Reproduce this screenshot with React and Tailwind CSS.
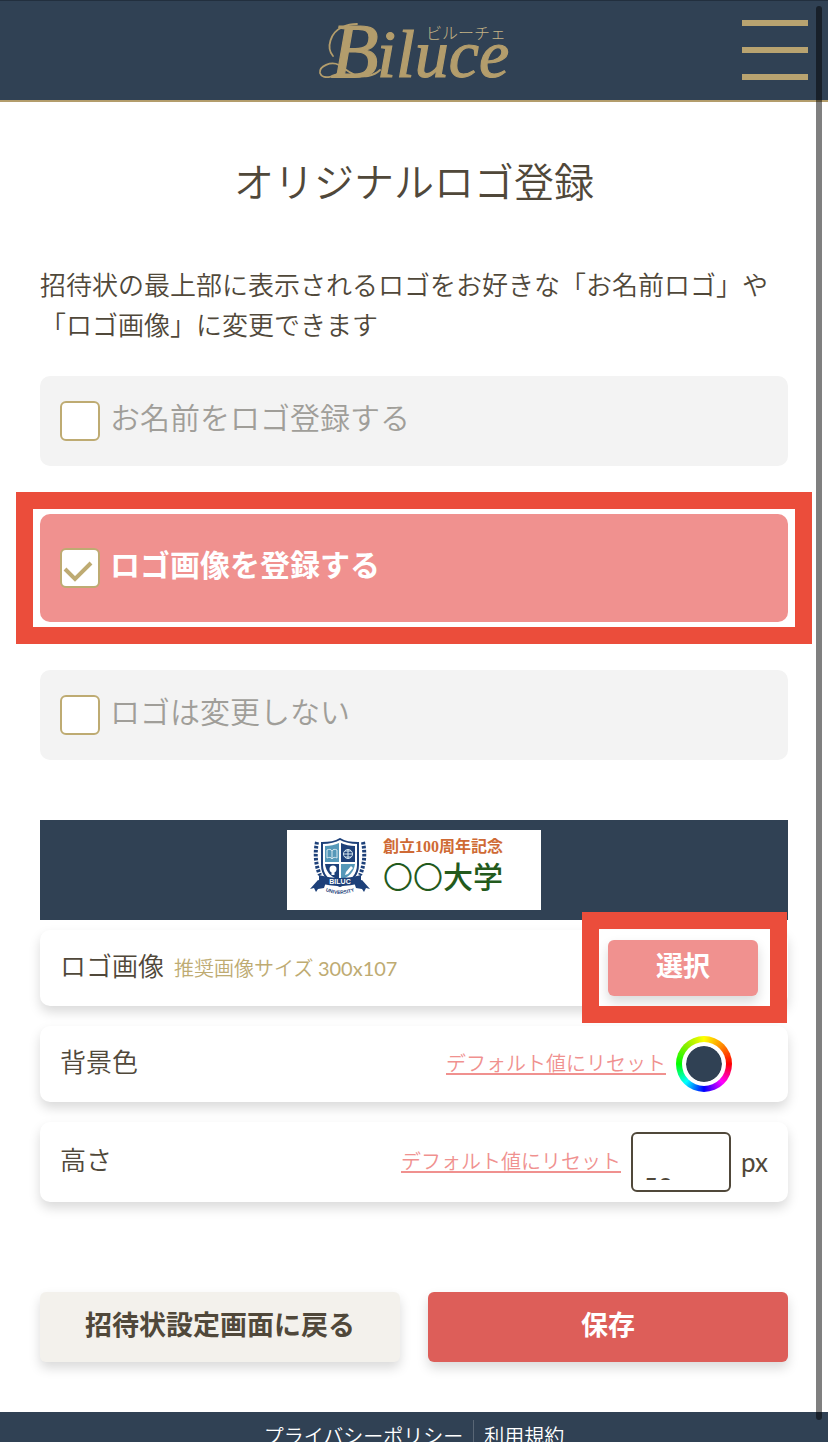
import { useState } from "react";

const LOGO_OPTIONS = [
  { id: "name", label: "お名前をロゴ登録する" },
  { id: "image", label: "ロゴ画像を登録する" },
  { id: "none", label: "ロゴは変更しない" },
];

const DEFAULT_COLOR = "#304154";

const BiluceLogo = () => (
  <svg viewBox="0 0 190 60" className="h-[60px] w-[190px] overflow-visible" role="img" aria-label="Biluce ビルーチェ">
    <g fill="none" stroke="#b39d6c" strokeLinecap="round">
      <path d="M14 36C7 28 11 12 24 7c4-2 9-3 14-3" strokeWidth="1.8" />
      <path d="M24 48C18 58 3 60 1 53c-1-7 11-12 19-8 9 6 16 13 29 11 5-1 9-3 12-6" strokeWidth="1.8" />
    </g>
    <text
      y="57"
      fill="#b39d6c"
      stroke="#b39d6c"
      strokeWidth="1.2"
      fontFamily="'Liberation Serif', serif"
      fontStyle="italic"
    >
      <tspan x="12" fontSize="78">B</tspan>
      <tspan x="58" fontSize="68">iluce</tspan>
    </text>
    <text
      x="107"
      y="19"
      fill="#c4b386"
      fontSize="16"
      fontWeight="300"
      fontFamily="'Noto Sans CJK JP', sans-serif"
    >
      ビルーチェ
    </text>
  </svg>
);

const Crest = () => (
  <svg viewBox="0 0 62 58" className="h-[58px] w-[62px] shrink-0" aria-hidden="true">
    {/* laurel branches */}
    <g fill="none" stroke="#1d4079" strokeWidth="4" strokeDasharray="2.6 1.4">
      <path d="M8 4C6 14 6 26 11 37" />
      <path d="M54 4c2 10 2 22-3 33" />
    </g>
    {/* shield */}
    <path
      d="M31 1c5 3 11 4 18 4v22c0 10-7 17-18 21C20 44 13 37 13 27V5c7 0 13-1 18-4z"
      fill="#fff"
      stroke="#1d4079"
      strokeWidth="2"
    />
    <path d="M30 5v19H16V8c5 0 10-1 14-3z" fill="#5598b9" />
    <path d="M32 5c4 2 9 3 14 3v16H32z" fill="#1d4079" />
    <path d="M16 26h14v16c-8-3-13-8-14-16z" fill="#1d4079" />
    <path d="M32 26h14c-1 8-6 13-14 16z" fill="#5598b9" />
    <g fill="none" stroke="#d5e7ef" strokeWidth="1">
      <path d="M18 12c2-1 4-1 5 1 1-2 3-2 5-1v8c-2-1-4-1-5 1-1-2-3-2-5-1zM23 13v8" />
      <circle cx="39" cy="16" r="4.5" />
      <path d="M34.500 16h9M39 11.500v9M36 13h6M36 19h6" />
    </g>
    <circle cx="24" cy="31" r="3.500" fill="#fff" />
    <path d="M22.500 33h3v4h-3z" fill="#fff" />
    <path d="M36 37l1-3 5-6 2 2-5 6z" fill="#fff" />
    {/* ribbon */}
    <path d="M1 51l8-9 8 2-2 6-6 1-2 3-2-4zM61 51l-8-9-8 2 2 6 6 1 2 3 2-4z" fill="#1d4079" />
    <path d="M10 37c14 4 28 4 42 0v8c-14 4-28 4-42 0z" fill="#1d4079" />
    <text
      x="31"
      y="46"
      textAnchor="middle"
      fill="#fff"
      fontSize="7"
      fontWeight="700"
      fontFamily="'Liberation Sans', sans-serif"
    >
      BILUC
    </text>
    <path id="crest-arc" d="M12 51q19 10 38 0" fill="none" />
    <text fill="#1d4079" fontSize="5" fontWeight="700" fontFamily="'Liberation Sans', sans-serif">
      <textPath href="#crest-arc" startOffset="50%" textAnchor="middle">
        UNIVERSITY
      </textPath>
    </text>
  </svg>
);

const Header = () => (
  <header className="grid h-[102px] shrink-0 grid-cols-[1fr_auto_1fr] items-center border-t border-b-2 border-t-[#222f3e] border-b-[#b39d6c] bg-[#304154] px-5 pb-0.5">
    <a href="#" className="col-start-2">
      <BiluceLogo />
    </a>
    <button type="button" aria-label="メニュー" className="flex w-[66px] flex-col gap-[21px] justify-self-end">
      <span className="h-1.5 w-full bg-[#b8a370]" />
      <span className="h-1.5 w-full bg-[#b8a370]" />
      <span className="h-1.5 w-full bg-[#b8a370]" />
    </button>
  </header>
);

const LogoOption = ({ option, checked, onSelect }) => (
  <div className="relative">
    <label
      className={`flex items-center gap-2.5 rounded-[10px] px-5 text-[30px] leading-10 ${
        checked ? "h-[108px] bg-[#f0918f] font-bold text-white" : "h-[90px] bg-[#f3f3f3] font-[350] text-[#a09e99]"
      }`}
    >
      <span className="grid size-10 shrink-0">
        <input
          type="checkbox"
          checked={checked}
          onChange={onSelect}
          className="col-start-1 row-start-1 size-10 appearance-none rounded-md border-2 border-[#beab72] bg-white"
        />
        {checked && (
          <svg viewBox="0 0 40 40" className="pointer-events-none z-10 col-start-1 row-start-1 size-10">
            <path d="M5 21l10 10 16-16" fill="none" stroke="#beab72" strokeWidth="4" />
          </svg>
        )}
      </span>
      <span className="pb-2.5">{option.label}</span>
    </label>
    {checked && (
      <div className="pointer-events-none absolute -inset-x-6 -inset-y-[22px] border-[17px] border-[#eb4d3b]" />
    )}
  </div>
);

const SettingRow = ({ children }) => (
  <div className="flex min-h-[76px] items-center gap-2.5 rounded-[10px] bg-white px-5 shadow-[0_6px_12px_rgba(0,0,0,0.15)]">
    {children}
  </div>
);

const ResetLink = ({ onClick }) => (
  <a
    href="#"
    onClick={(e) => {
      e.preventDefault();
      onClick();
    }}
    className="ml-auto border-b-2 border-[#f0918f] text-xl leading-5 font-[350] text-[#f0918f]"
  >
    デフォルト値にリセット
  </a>
);

const App = () => {
  const [selected, setSelected] = useState("image");
  const [color, setColor] = useState(DEFAULT_COLOR);
  const [height, setHeight] = useState("50");

  return (
    <div className="relative flex h-screen flex-col overflow-hidden bg-white font-['Noto_Sans_CJK_JP',sans-serif] text-[#50483a]">
      <Header />

      <main className="shrink-0 px-10 pt-12 pb-[50px]">
        <h1 className="text-center text-[40px] leading-[60px] font-[350]">オリジナルロゴ登録</h1>
        <p className="mt-[54px] text-[26px] leading-10 font-[350]">
          招待状の最上部に表示されるロゴをお好きな「お名前ロゴ」や「ロゴ画像」に変更できます
        </p>

        <div className="mt-8 flex flex-col gap-12">
          {LOGO_OPTIONS.map((option) => (
            <LogoOption
              key={option.id}
              option={option}
              checked={selected === option.id}
              onSelect={() => setSelected(option.id)}
            />
          ))}
        </div>

        <div className="mt-[60px] flex h-[100px] items-center justify-center" style={{ backgroundColor: color }}>
          <div className="flex h-20 w-[254px] items-center gap-3 bg-white pb-1.5 pl-[22px]">
            <Crest />
            <div className="pb-2 whitespace-nowrap">
              <p className="font-['Liberation_Serif','Noto_Sans_CJK_JP',serif] text-base leading-6 font-bold text-[#cf6a35]">
                創立100周年記念
              </p>
              <p className="text-3xl leading-8 font-medium text-[#235a1c]">
                <span className="font-[350]">〇〇</span>大学
              </p>
            </div>
          </div>
        </div>

        <div className="mt-2.5 flex flex-col gap-5">
          <SettingRow>
            <span className="pb-1.5 text-[26px] leading-10 font-[350]">ロゴ画像</span>
            <span className="font-['Noto_Sans_CJK_JP',sans-serif] text-xl font-[350] text-[#beab72]">
              推奨画像サイズ <span className="font-['Lato',sans-serif] font-normal">300x107</span>
            </span>
            <div className="relative mr-2.5 ml-auto">
              <button
                type="button"
                className="h-14 w-[150px] rounded-md bg-[#f0918f] pb-1.5 text-[27px] leading-10 font-bold text-white shadow-[0_6px_12px_rgba(0,0,0,0.15)]"
              >
                選択
              </button>
              <div className="pointer-events-none absolute -top-7 -right-[29px] -bottom-[27px] -left-[26px] z-10 border-[17px] border-[#eb4d3b]" />
            </div>
          </SettingRow>

          <SettingRow>
            <label htmlFor="bg-color" className="pb-1.5 text-[26px] leading-10 font-[350]">
              背景色
            </label>
            <ResetLink onClick={() => setColor(DEFAULT_COLOR)} />
            <span className="mr-9 flex rounded-full bg-[conic-gradient(from_90deg,#f00,#f0f,#00f,#0ff,#0f0,#8e0,#ff0,#f80,#f00)] p-1.5">
              <span className="flex rounded-full bg-white p-1">
                <input
                  id="bg-color"
                  type="color"
                  value={color}
                  onChange={(e) => setColor(e.target.value)}
                  className="size-9 appearance-none rounded-full border-0 bg-transparent p-0 [&::-webkit-color-swatch]:rounded-full [&::-webkit-color-swatch]:border-0 [&::-webkit-color-swatch-wrapper]:p-0"
                />
              </span>
            </span>
          </SettingRow>

          <SettingRow>
            <label htmlFor="logo-height" className="pb-1.5 text-[26px] leading-10 font-[350]">
              高さ
            </label>
            <ResetLink onClick={() => setHeight("50")} />
            <div className="my-2.5 h-[60px] w-[100px] rounded-md border-2 border-[#50483a] p-2.5">
              <div className="h-9 overflow-hidden">
                <input
                  id="logo-height"
                  type="text"
                  inputMode="numeric"
                  value={height}
                  onChange={(e) => setHeight(e.target.value)}
                  className="mt-6 h-10 w-full font-['Lato',sans-serif] text-[26px] leading-10 outline-none"
                />
              </div>
            </div>
            <span className="font-['Lato',sans-serif] text-[26px] leading-10">px</span>
          </SettingRow>
        </div>

        <div className="mt-[90px] grid grid-cols-2 gap-7 text-[27px] leading-10 font-bold">
          <button
            type="button"
            className="h-[70px] rounded-md bg-[#f3f1ec] pb-1.5 shadow-[0_6px_12px_rgba(0,0,0,0.15)]"
          >
            招待状設定画面に戻る
          </button>
          <button
            type="button"
            className="h-[70px] rounded-md bg-[#dd5e59] pb-1.5 text-white shadow-[0_6px_12px_rgba(0,0,0,0.15)]"
          >
            保存
          </button>
        </div>
      </main>

      <footer className="flex shrink-0 items-start justify-center bg-[#304154] pt-2 pb-10 text-xl leading-8 font-[350] text-white">
        <a href="#" className="pr-2.5">
          プライバシーポリシー
        </a>
        <a href="#" className="border-l border-[#596675] pl-2.5">
          利用規約
        </a>
      </footer>

      {/* scroll thumb */}
      <div className="pointer-events-none absolute top-1.5 right-1.5 bottom-[22px] z-20 w-1.5 rounded-full bg-black/50" />
    </div>
  );
};

export default App;
